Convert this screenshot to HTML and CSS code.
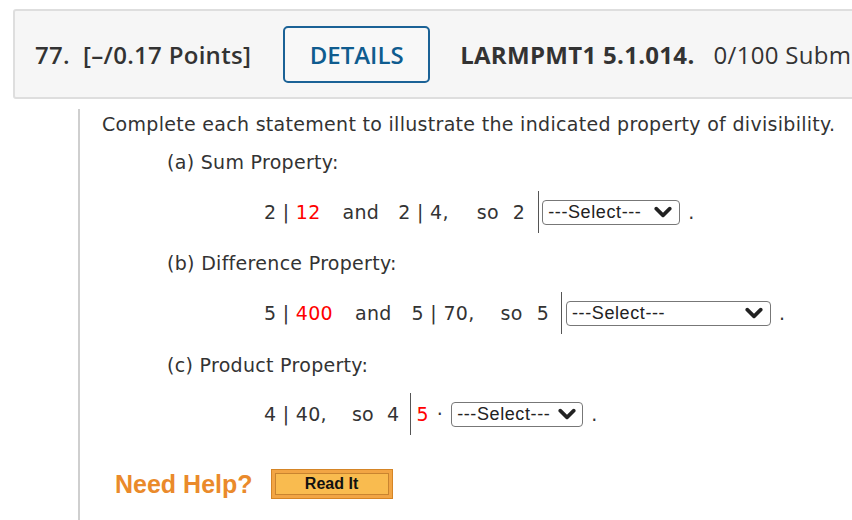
FILE: index.html
```html
<!DOCTYPE html>
<html>
<head>
<meta charset="utf-8">
<link rel="stylesheet" href="styles.css">
</head>
<body>
<div class="page">
  <div class="header">
    <span class="qnum">77.&nbsp; [–/0.17 Points]</span>
    <span class="details">DETAILS</span>
    <span class="code">LARMPMT1 5.1.014.</span>
    <span class="subs">0/100 Submissions Used</span>
  </div>
  <div class="body">
    <div class="row intro">Complete each statement to illustrate the indicated property of divisibility.</div>
    <div class="row label rl-a">(a) Sum Property:</div>
    <div class="row eq eq1">
      <span>2 | <span class="red">12</span></span>
      <span class="w-and">and</span>
      <span class="w-b">2 | 4,</span>
      <span class="w-so">so</span>
      <span class="w-d">2</span>
      <span class="bar"></span>
      <span class="sel sel1">---Select---<svg class="chev" viewBox="0 0 16 12"><path d="M2 3 L8 9 L14 3" fill="none" stroke="#222" stroke-width="3.2" stroke-linecap="round" stroke-linejoin="round"/></svg></span>
      <span class="dot">.</span>
    </div>
    <div class="row label rl-b">(b) Difference Property:</div>
    <div class="row eq eq2">
      <span>5 | <span class="red">400</span></span>
      <span class="w-and2">and</span>
      <span class="w-b2">5 | 70,</span>
      <span class="w-so2">so</span>
      <span class="w-d">5</span>
      <span class="bar bar2"></span>
      <span class="sel sel2">---Select---<svg class="chev" viewBox="0 0 16 12"><path d="M2 3 L8 9 L14 3" fill="none" stroke="#222" stroke-width="3.2" stroke-linecap="round" stroke-linejoin="round"/></svg></span>
      <span class="dot">.</span>
    </div>
    <div class="row label rl-c">(c) Product Property:</div>
    <div class="row eq eq3">
      <span>4 | 40,</span>
      <span class="w-so3">so</span>
      <span class="w-d3">4</span>
      <span class="bar bar3"></span>
      <span class="red five">5</span>
      <span class="cdot">·</span>
      <span class="sel sel3">---Select---<svg class="chev" viewBox="0 0 16 12"><path d="M2 3 L8 9 L14 3" fill="none" stroke="#222" stroke-width="3.2" stroke-linecap="round" stroke-linejoin="round"/></svg></span>
      <span class="dot">.</span>
    </div>
    <div class="help">
      <span class="need">Need Help?</span>
      <span class="readit"><span class="readit-in">Read It</span></span>
    </div>
  </div>
</div>
</body>
</html>
```

FILE: styles.css
```css
html, body {
  margin: 0;
  padding: 0;
  background: #fff;
}
.page {
  padding: 9px 0 0 13px;
  width: 839px;
  height: 511px;
  overflow: hidden;
  font-family: "DejaVu Sans", Verdana, sans-serif;
  color: #333;
}
.header {
  box-sizing: border-box;
  height: 90px;
  width: 1000px;
  display: flex;
  align-items: center;
  padding-left: 20px;
  background: #f6f6f6;
  border: 2px solid #dedede;
  border-radius: 3px;
  font-family: "Open Sans", sans-serif;
  font-size: 24px;
  letter-spacing: 0.3px;
  color: #333;
  white-space: nowrap;
}
.qnum {
  font-weight: 600;
}
.details {
  box-sizing: border-box;
  margin-left: 32px;
  width: 147px;
  height: 57px;
  border: 2px solid #1b6296;
  border-radius: 5px;
  color: #0f5c8f;
  font-weight: 600;
  font-size: 24px;
  letter-spacing: 0;
  display: flex;
  align-items: center;
  justify-content: center;
  background: #f8f8f8;
}
.code {
  margin-left: 30px;
  font-weight: 700;
}
.subs {
  margin-left: 19px;
  font-weight: 400;
}
.body {
  margin-left: 65px;
  border-left: 2px solid #cfcfcf;
  padding-left: 22px;
  height: 430px;
  font-size: 19px;
  letter-spacing: 0.3px;
}
.row {
  display: flex;
  align-items: center;
  white-space: nowrap;
}
.intro {
  margin-top: 10px;
  height: 30px;
}
.label {
  padding-left: 65px;
}
.rl-a { height: 46px; }
.rl-b { height: 48px; }
.rl-c { height: 52px; }
.eq {
  padding-left: 162px;
}
.eq1 { height: 54px; }
.eq2 { height: 52px; }
.eq3 { height: 46px; }
.red { color: #ff0000; }
.w-and { margin-left: 22px; }
.w-b { margin-left: 19px; }
.w-so { margin-left: 28px; }
.w-d { margin-left: 14px; }
.w-d3 { margin-left: 13px; }
.w-and2 { margin-left: 22px; }
.w-b2 { margin-left: 20px; }
.w-so2 { margin-left: 26px; }
.w-so3 { margin-left: 25px; }
.bar {
  display: inline-block;
  width: 0;
  height: 42px;
  border-left: 1.5px solid #555;
  margin-left: 13px;
}
.bar2 { margin-left: 12px; }
.bar3 { margin-left: 11px; }
.five { margin-left: 5px; }
.cdot { margin-left: 8px; }
.sel {
  box-sizing: border-box;
  display: inline-flex;
  align-items: center;
  justify-content: space-between;
  height: 25px;
  margin-left: 3px;
  padding: 0 7px 0 5px;
  border: 1.5px solid #777;
  border-radius: 4px;
  font-family: "Liberation Sans", Arial, sans-serif;
  font-size: 18px;
  letter-spacing: 0.6px;
  color: #222;
  background: #fff;
}
.sel1 { width: 138px; }
.sel2 { width: 205px; margin-left: 4px; }
.sel3 { width: 132px; margin-left: 8px; padding-right: 6px; }
.chev {
  width: 18px;
  height: 14px;
  flex: none;
}
.dot { margin-left: 8px; }
.help {
  display: flex;
  align-items: center;
  margin-top: 32px;
  margin-left: 13px;
  height: 30px;
  letter-spacing: 0;
}
.need {
  font-family: "Liberation Sans", Arial, sans-serif;
  font-weight: 700;
  font-size: 25px;
  color: #ea8a2b;
}
.readit {
  box-sizing: border-box;
  margin-left: 18px;
  width: 122px;
  height: 30px;
  padding: 3px;
  background: #f2a544;
  border: 1px solid #d58526;
  display: flex;
}
.readit-in {
  flex: 1;
  border: 1px solid #c9842f;
  background: #f9bb4f;
  display: flex;
  align-items: center;
  justify-content: center;
  font-family: "Liberation Sans", Arial, sans-serif;
  font-weight: 700;
  font-size: 16px;
  color: #111;
}
```
